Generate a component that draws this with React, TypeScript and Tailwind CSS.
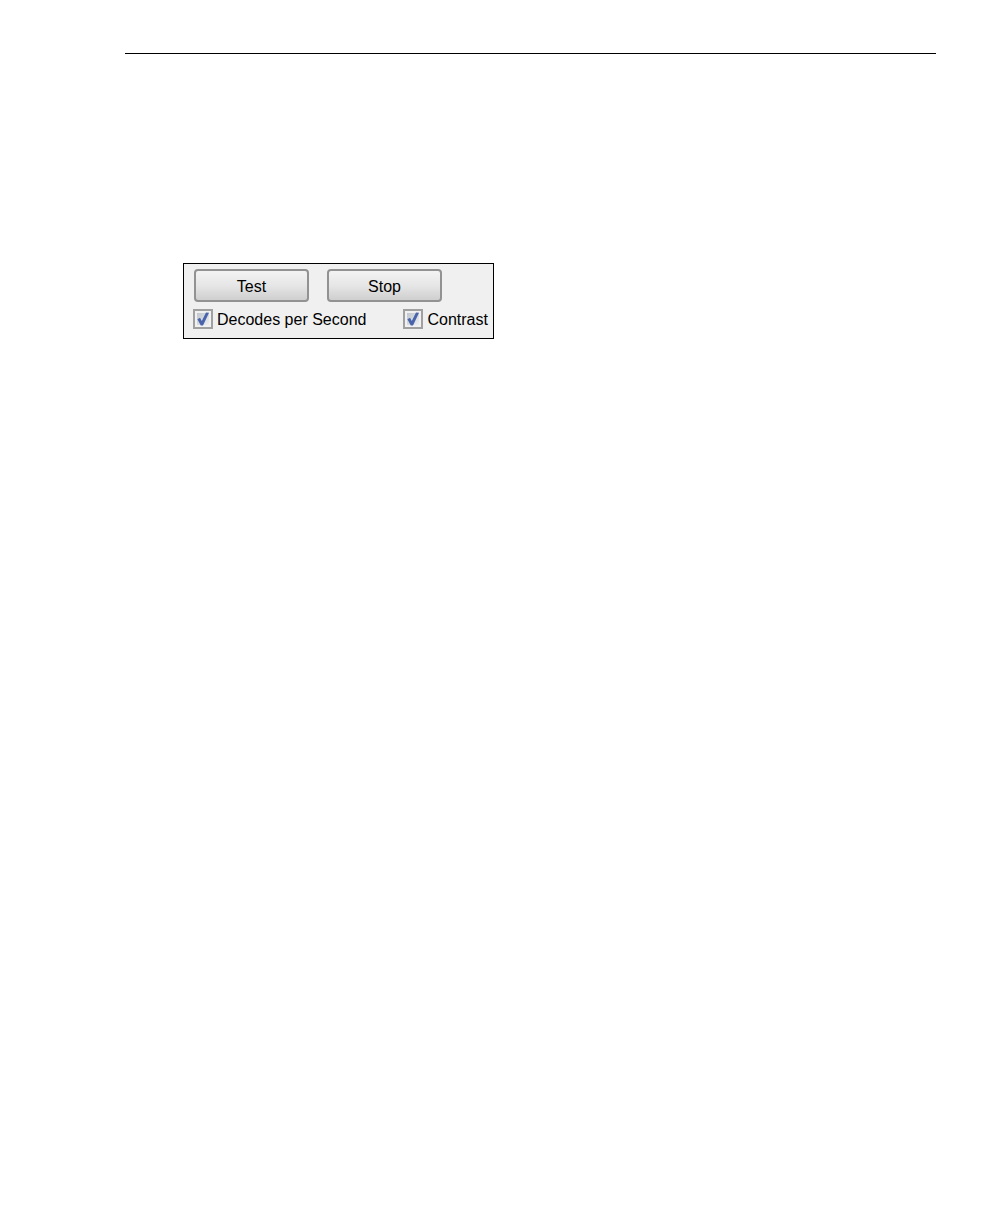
import { useState } from "react"

type CheckOptionProps = {
  id: string
  label: string
  checked: boolean
  onChange: (checked: boolean) => void
}

function PushButton({ children }: { children: string }) {
  return (
    <button
      type="button"
      className="w-[115px] h-[33px] rounded-[4px] border-2 border-[#929292] bg-linear-to-b from-[#f3f3f3] from-0% via-[#e6e6e6] via-50% to-[#cfcfcf] to-100% pt-px text-black"
    >
      {children}
    </button>
  )
}

function CheckOption({ id, label, checked, onChange }: CheckOptionProps) {
  return (
    <div className="flex items-center gap-1">
      <span className="relative block size-5">
        <input
          id={id}
          type="checkbox"
          checked={checked}
          onChange={(e) => onChange(e.target.checked)}
          className="block size-5 appearance-none border-2 border-[#a0a0a0] bg-linear-to-br from-[#b9c0c9] to-[#f4f5f7] shadow-[inset_0_0_0_2px_#f1f1f1]"
        />
        {checked && (
          <svg
            viewBox="0 0 20 20"
            className="pointer-events-none absolute inset-0 size-5"
            fill="#4a64ac"
          >
            <path d="M4.4 10.2 L7 8.8 L8.8 12 L13 3.4 L16 3.8 L10 16.6 L7.8 16.6 Z" />
          </svg>
        )}
      </span>
      <label htmlFor={id} className="pt-px">
        {label}
      </label>
    </div>
  )
}

export default function App() {
  const [decodes, setDecodes] = useState(true)
  const [contrast, setContrast] = useState(true)

  return (
    <div className="min-h-screen bg-white pt-[53px] pr-[72px] pl-[125px] text-black">
      <hr className="border-t border-black" />

      {/* Test controls */}
      <div className="mt-[209px] ml-[58px] w-fit border border-black bg-[#f0f0f0] pt-[5px] pr-[5px] pb-2 pl-[9px] font-['Liberation_Sans',sans-serif] text-base leading-[21px]">
        <div className="flex gap-[18px] pl-px">
          <PushButton>Test</PushButton>
          <PushButton>Stop</PushButton>
        </div>
        <div className="mt-[6px] flex gap-[37px]">
          <CheckOption
            id="decodes"
            label="Decodes per Second"
            checked={decodes}
            onChange={setDecodes}
          />
          <CheckOption
            id="contrast"
            label="Contrast"
            checked={contrast}
            onChange={setContrast}
          />
        </div>
      </div>
    </div>
  )
}
